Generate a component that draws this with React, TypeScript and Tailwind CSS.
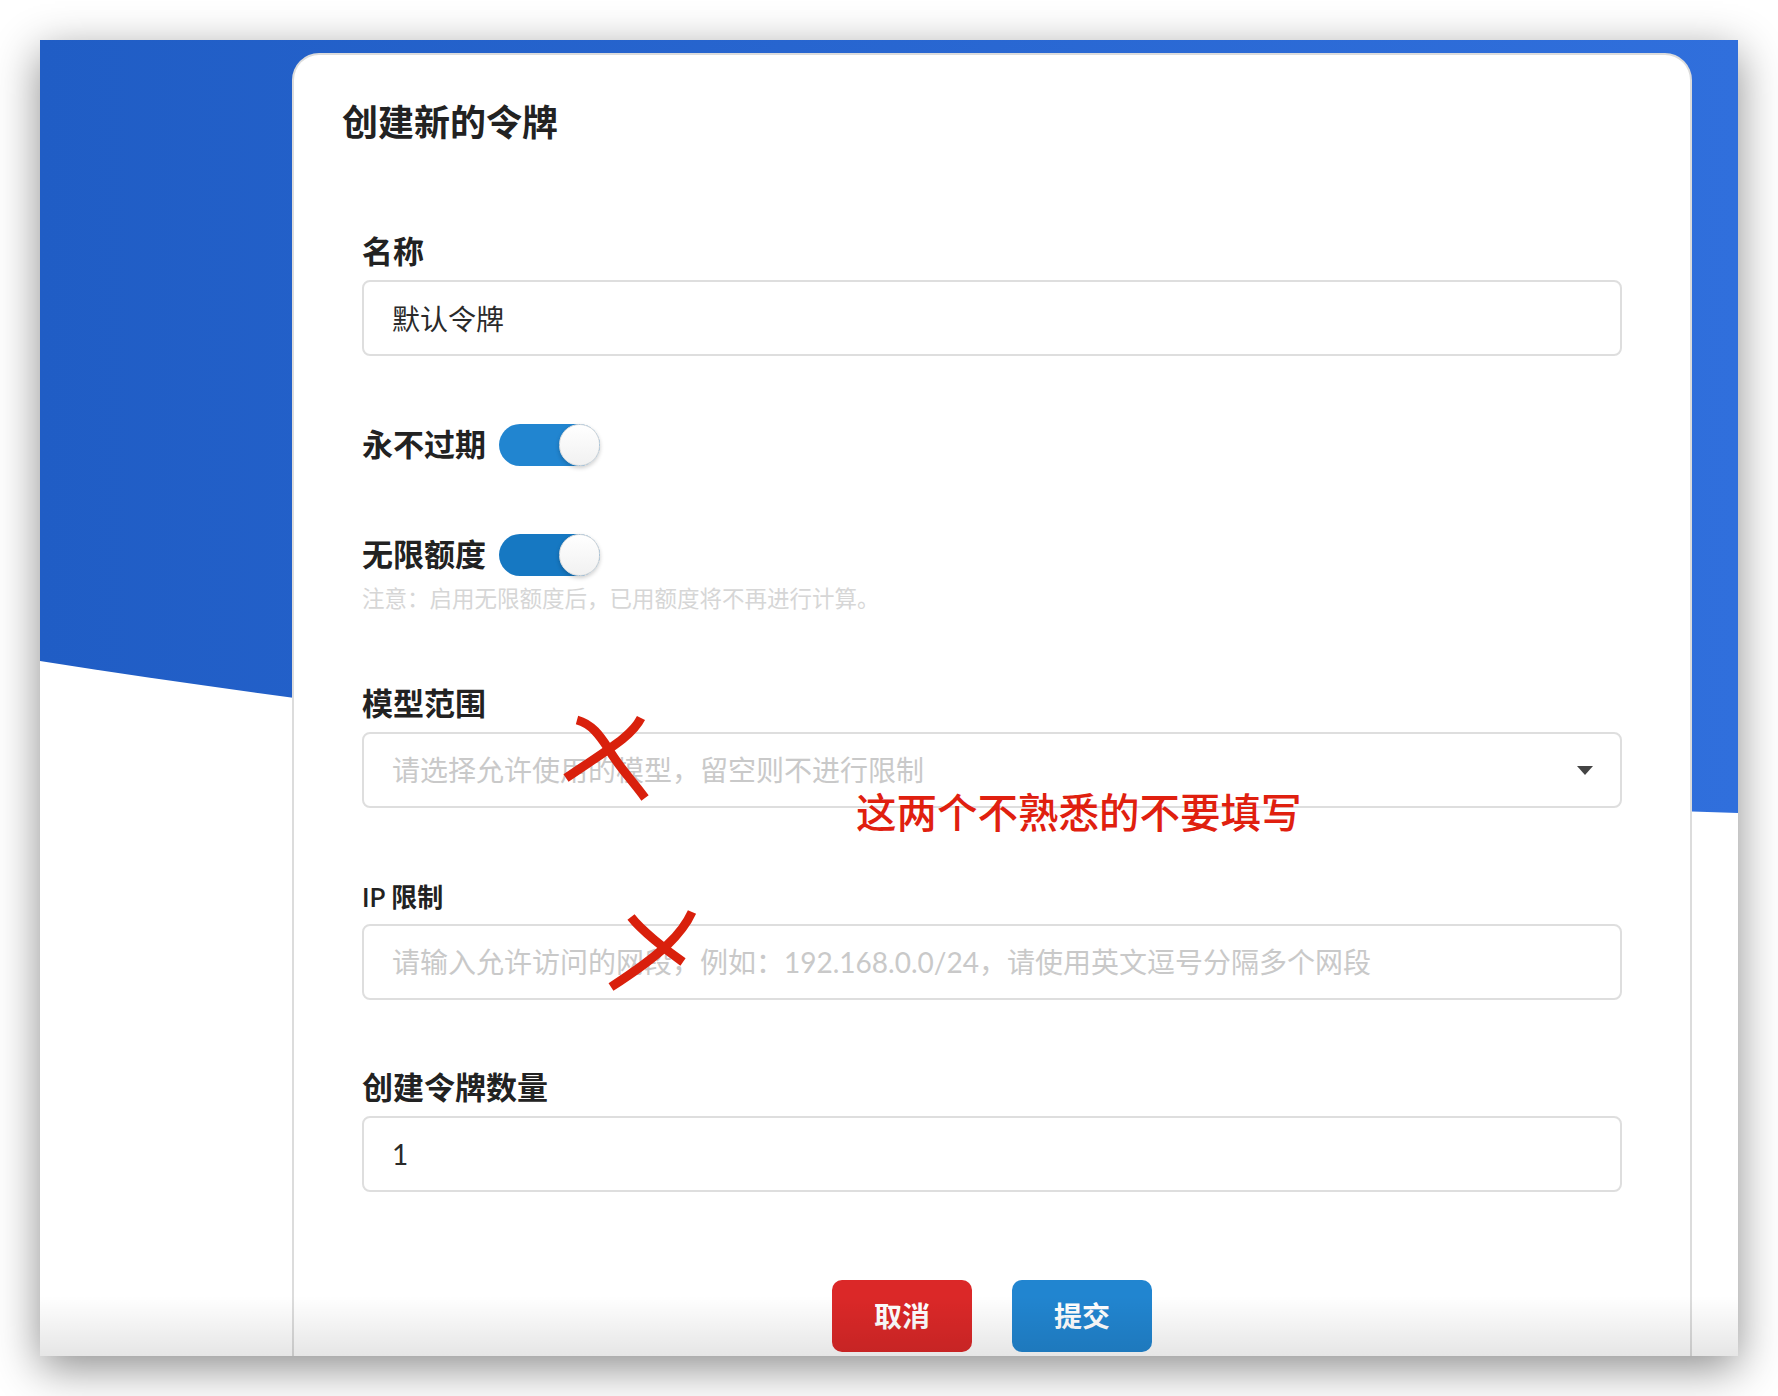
const FONT = "font-['Lato','Noto_Sans_CJK_SC',sans-serif]";

function Toggle({ color }: { color: string }) {
  return (
    <div className={`relative h-[42px] w-[101px] rounded-full ${color}`}>
      <div className="absolute right-0 top-0 h-[42px] w-[41px] rounded-full border border-[#dcdcdc] bg-gradient-to-b from-white to-[#f1f1f1] shadow-[0_2px_4px_rgba(0,0,0,0.2)]" />
    </div>
  );
}

function Field({ value, placeholder }: { value?: string; placeholder?: string }) {
  return (
    <input
      readOnly
      value={value}
      placeholder={placeholder}
      className="block h-[76px] w-full rounded-lg border-2 border-[#dedede] bg-white pl-[28px] text-[28px] text-[#2a2a2a] outline-none placeholder:text-[#c9c9c9]"
    />
  );
}

function Cross({ className, a, b }: { className: string; a: string; b: string }) {
  return (
    <svg className={`pointer-events-none absolute ${className}`} width="100" height="100" viewBox="0 0 100 100" fill="none">
      <path d={a} stroke="#d9200c" strokeWidth="9" />
      <path d={b} stroke="#d9200c" strokeWidth="9" />
    </svg>
  );
}

export default function App() {
  return (
    <div className={`h-[1396px] w-[1778px] overflow-hidden bg-white pl-10 pt-10 ${FONT}`}>
      <div className="relative h-[1316px] w-[1698px] overflow-hidden bg-white shadow-[0_12px_42px_rgba(0,0,0,0.45)]">
        {/* wave behind the card */}
        <svg className="absolute left-0 top-0" width="1698" height="800" viewBox="0 0 1698 800">
          <defs>
            <linearGradient id="wave" x1="0" y1="0" x2="1" y2="0">
              <stop offset="0" stopColor="#205dc5" />
              <stop offset="1" stopColor="#306fdc" />
            </linearGradient>
          </defs>
          <path d="M0 0H1698V773C1100 755 500 700 0 621Z" fill="url(#wave)" />
        </svg>

        {/* card */}
        <div className="relative ml-[252px] mt-[13px] h-[1303px] w-[1400px] rounded-t-[27px] border-2 border-b-0 border-[#dcdcdc] bg-white text-[#222222]">
          <div className="pl-12 pt-[42px] text-[36px] font-semibold leading-[50px]">创建新的令牌</div>

          <div className="px-[68px]">
            <div className="mb-[9px] mt-[84px] text-[31px] font-semibold leading-10">名称</div>
            <Field value="默认令牌" />

            <div className="mt-[68px] flex h-[42px] gap-[13px]">
              <span className="text-[31px] font-semibold leading-10">永不过期</span>
              <Toggle color="bg-[#2185d0]" />
            </div>

            <div className="mt-[68px] flex h-[42px] gap-[13px]">
              <span className="text-[31px] font-semibold leading-10">无限额度</span>
              <Toggle color="bg-[#1678c2]" />
            </div>
            <div className="mt-2 text-[22.5px] leading-[30px] text-[#d6d6d6]">
              注意：启用无限额度后，已用额度将不再进行计算。
            </div>

            <div className="mb-[9px] mt-[69px] text-[31px] font-semibold leading-10">模型范围</div>
            <div className="flex h-[76px] items-center justify-between rounded-lg border-2 border-[#dedede] pl-[28px] pr-[27px] text-[28px] text-[#c9c9c9]">
              <span>请选择允许使用的模型，留空则不进行限制</span>
              <svg width="16" height="9" viewBox="0 0 16 9">
                <path d="M0 0H16L8 9Z" fill="#444444" />
              </svg>
            </div>

            <div className="mb-[7px] mt-[69px] text-[26px] font-semibold leading-10">IP 限制</div>
            <Field placeholder="请输入允许访问的网段，例如：192.168.0.0/24，请使用英文逗号分隔多个网段" />

            <div className="mb-[9px] mt-[67px] text-[31px] font-semibold leading-10">创建令牌数量</div>
            <Field value="1" />

            <div className="mt-[88px] flex justify-center gap-10">
              <button className="h-[72px] w-[140px] rounded-[10px] bg-[#db2828] text-[28px] font-semibold text-white">取消</button>
              <button className="h-[72px] w-[140px] rounded-[10px] bg-[#2185d0] text-[28px] font-semibold text-white">提交</button>
            </div>
          </div>
        </div>

        {/* red annotations drawn over the form */}
        <Cross className="left-[520px] top-[672px]" a="M17 8C32 12 40 24 48 36C58 54 72 68 85 86" b="M81 6C72 24 50 36 6 66" />
        <Cross className="left-[566px] top-[868px]" a="M25 9C35 22 60 42 77 54" b="M86 4C76 26 56 46 5 79" />
        <div className="absolute left-[816px] top-[745px] text-[40.5px] font-medium leading-[56px] text-[#e0200f]">这两个不熟悉的不要填写</div>

        {/* bottom fade of the window */}
        <div className="pointer-events-none absolute bottom-0 left-0 h-[60px] w-full bg-gradient-to-b from-black/0 to-black/10" />
      </div>
    </div>
  );
}
